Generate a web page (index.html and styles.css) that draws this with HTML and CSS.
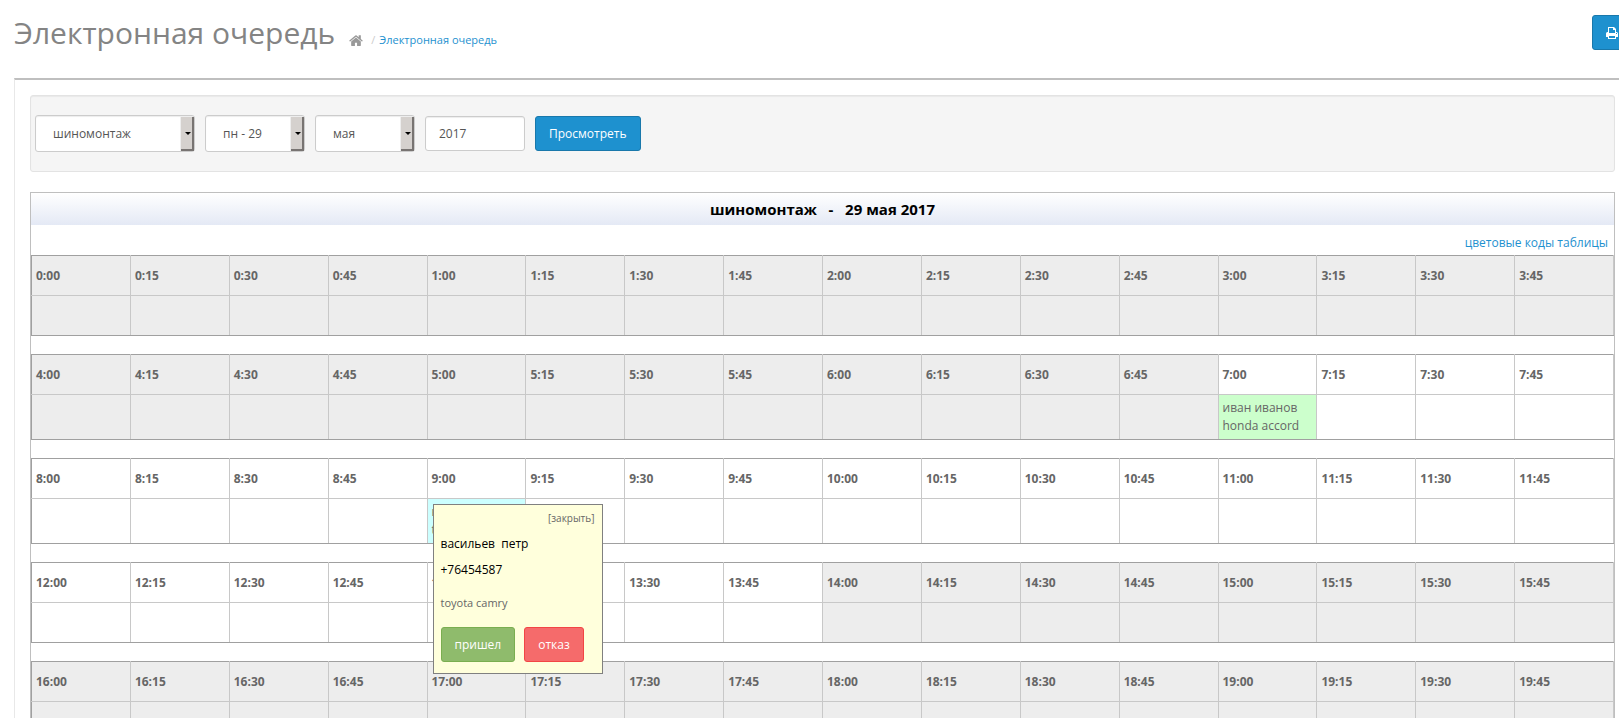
FILE: index.html
```html
<!DOCTYPE html>
<html lang="ru">
<head>
<meta charset="utf-8">
<title>Электронная очередь</title>
<link rel="stylesheet" href="styles.css">
</head>
<body>
<div class="page">
<header class="page-header">
  <h1>Электронная очередь</h1>
  <nav class="breadcrumb" aria-label="Навигация">
    <a class="home" href="#" aria-label="Главная"><svg viewBox="0 0 1664 1312" width="14" height="11" aria-hidden="true"><path fill="currentColor" d="M1408 768v480q0 26-19 45t-45 19H960V928H704v384H320q-26 0-45-19t-19-45V768l575-474 577 474zm223-69l-62 74q-8 9-21 11h-3q-13 0-21-7L832 200 140 777q-12 8-24 7-13-2-21-11l-62-74q-8-10-7-23t11-21L756 56q32-26 76-26t76 26l244 204V65q0-14 9-23t23-9h192q14 0 23 9t9 23v408l219 182q10 8 11 21t-7 23z"/></svg></a>
    <span class="slash">/</span>
    <a href="#">Электронная очередь</a>
  </nav>
  <button class="btn print" type="button" aria-label="Печать"><svg viewBox="0 0 12 12" width="12" height="12" aria-hidden="true"><path fill="currentColor" fill-rule="evenodd" d="M2 0h6l2 2v3h.5Q12 5 12 6.500V10h-2v2H2v-2H0V6.500Q0 5 1.500 5H2zM3 1v5h6V3H7V1zM3 9v2h6V9zM10 6v1h1V6z"/></svg></button>
</header>
<main class="panel">
  <form class="filter">
    <span class="picker wide"><select aria-label="Услуга"><option>шиномонтаж</option></select></span>
    <span class="picker"><select aria-label="День"><option>пн - 29</option></select></span>
    <span class="picker"><select aria-label="Месяц"><option>мая</option></select></span>
    <input class="year" type="text" value="2017" aria-label="Год">
    <button class="btn" type="button">Просмотреть</button>
  </form>
  <section class="schedule">
    <h2>шиномонтаж &nbsp; - &nbsp; 29 мая 2017</h2>
    <div class="legend"><a href="#">цветовые коды таблицы</a></div>
    <table class="slots">
      <tr class="off"><th>0:00</th><th>0:15</th><th>0:30</th><th>0:45</th><th>1:00</th><th>1:15</th><th>1:30</th><th>1:45</th><th>2:00</th><th>2:15</th><th>2:30</th><th>2:45</th><th>3:00</th><th>3:15</th><th>3:30</th><th>3:45</th></tr>
      <tr class="off"><td></td><td></td><td></td><td></td><td></td><td></td><td></td><td></td><td></td><td></td><td></td><td></td><td></td><td></td><td></td><td></td></tr>
    </table>
    <table class="slots">
      <tr><th class="off">4:00</th><th class="off">4:15</th><th class="off">4:30</th><th class="off">4:45</th><th class="off">5:00</th><th class="off">5:15</th><th class="off">5:30</th><th class="off">5:45</th><th class="off">6:00</th><th class="off">6:15</th><th class="off">6:30</th><th class="off">6:45</th><th>7:00</th><th>7:15</th><th>7:30</th><th>7:45</th></tr>
      <tr><td class="off"></td><td class="off"></td><td class="off"></td><td class="off"></td><td class="off"></td><td class="off"></td><td class="off"></td><td class="off"></td><td class="off"></td><td class="off"></td><td class="off"></td><td class="off"></td><td class="done">иван иванов<br>honda accord</td><td></td><td></td><td></td></tr>
    </table>
    <table class="slots">
      <tr><th>8:00</th><th>8:15</th><th>8:30</th><th>8:45</th><th>9:00</th><th>9:15</th><th>9:30</th><th>9:45</th><th>10:00</th><th>10:15</th><th>10:30</th><th>10:45</th><th>11:00</th><th>11:15</th><th>11:30</th><th>11:45</th></tr>
      <tr><td></td><td></td><td></td><td></td><td class="booked">васильев петр<br>toyota camry
        <div class="popup">
          <button class="close" type="button">[закрыть]</button>
          <p class="client">васильев &nbsp;петр</p>
          <p class="client">+76454587</p>
          <p class="car">toyota camry</p>
          <div class="actions">
            <button class="btn success" type="button">пришел</button>
            <button class="btn danger" type="button">отказ</button>
          </div>
        </div>
      </td><td></td><td></td><td></td><td></td><td></td><td></td><td></td><td></td><td></td><td></td><td></td></tr>
    </table>
    <table class="slots">
      <tr><th>12:00</th><th>12:15</th><th>12:30</th><th>12:45</th><th>13:00</th><th>13:15</th><th>13:30</th><th>13:45</th><th class="off">14:00</th><th class="off">14:15</th><th class="off">14:30</th><th class="off">14:45</th><th class="off">15:00</th><th class="off">15:15</th><th class="off">15:30</th><th class="off">15:45</th></tr>
      <tr><td></td><td></td><td></td><td></td><td></td><td></td><td></td><td></td><td class="off"></td><td class="off"></td><td class="off"></td><td class="off"></td><td class="off"></td><td class="off"></td><td class="off"></td><td class="off"></td></tr>
    </table>
    <table class="slots">
      <tr class="off"><th>16:00</th><th>16:15</th><th>16:30</th><th>16:45</th><th>17:00</th><th>17:15</th><th>17:30</th><th>17:45</th><th>18:00</th><th>18:15</th><th>18:30</th><th>18:45</th><th>19:00</th><th>19:15</th><th>19:30</th><th>19:45</th></tr>
      <tr class="off"><td></td><td></td><td></td><td></td><td></td><td></td><td></td><td></td><td></td><td></td><td></td><td></td><td></td><td></td><td></td><td></td></tr>
    </table>
  </section>
</main>
</div>
</body>
</html>
```
FILE: styles.css
```css
* { box-sizing: border-box; }
html { overflow: hidden; }
body {
  margin: 0;
  height: 100vh;
  overflow: hidden;
  background: #fff;
  color: #666;
  font: 12px/18px "Open Sans", "Noto Sans", sans-serif;
}
a { color: #1e91cf; text-decoration: none; }
button, input, select { font: inherit; }
p { margin: 0; }

/* The content column runs past the right edge of the window */
.page { margin-left: 14px; margin-right: -12px; }

.page-header { display: flex; align-items: flex-start; padding-top: 15px; height: 78px; }
h1 { margin: 0; font-size: 30px; font-weight: 400; line-height: 36px; color: #848484; }
.breadcrumb { display: flex; align-items: center; margin: 16px 0 0 14px; font-size: 11px; }
.home { display: flex; color: #999; }
.slash { color: #ccc; margin: 0 4px 0 8px; }

.btn {
  height: 35px;
  padding: 0 13px;
  border: 1px solid #1978ab;
  border-radius: 3px;
  background: #1e91cf;
  color: #fff;
}
.print { margin-left: auto; width: 39px; display: flex; align-items: center; }
.print svg { flex: none; }
.success { background: #8fbb6c; border-color: #7aae50; }
.danger { background: #f56b6b; border-color: #f24545; }

.panel { border: 1px solid #e8e8e8; border-top: 2px solid #bfbfbf; padding: 15px; }

.filter {
  display: flex;
  align-items: center;
  gap: 10px;
  height: 77px;
  padding: 0 4px;
  border: 1px solid #e3e3e3;
  border-radius: 3px;
  background: #f5f5f5;
  box-shadow: inset 0 1px 1px rgba(0, 0, 0, .05);
}
.picker { position: relative; width: 100px; height: 37px; }
.wide { width: 160px; }
.picker select {
  appearance: none;
  width: 100%;
  height: 100%;
  padding: 0 17px;
}
.picker::before {
  content: "";
  position: absolute;
  inset: 2px 1px 1px auto;
  width: 11px;
  border: solid #787472;
  border-width: 0 2px 2px 0;
  background: #d5d1ce;
  box-shadow: -1px 0 #eee;
  pointer-events: none;
}
.picker::after {
  content: "";
  position: absolute;
  right: 4px;
  top: 17px;
  border: 3px solid transparent;
  border-top-color: #000;
  border-bottom: 0;
  pointer-events: none;
}
.picker select, .year {
  border: 1px solid #ccc;
  border-radius: 3px;
  background: #fff;
  color: #555;
  box-shadow: inset 0 1px 1px rgba(0, 0, 0, .075);
}
.year { width: 100px; height: 35px; padding: 0 13px; }

.schedule { margin-top: 20px; border: 1px solid #bfbfbf; }
h2 {
  margin: 0;
  background: linear-gradient(#fff, #e4e9f5);
  color: #000;
  font-size: 15px;
  line-height: 32px;
  text-align: center;
}
.legend { height: 30px; padding: 9px 6px 0; text-align: right; }

.slots {
  width: 100%;
  margin-bottom: 18px;
  table-layout: fixed;
  border-collapse: collapse;
}
.slots th, .slots td {
  height: 40px;
  padding: 4px;
  border: 1px solid #c8c8c8;
  text-align: left;
  white-space: nowrap;
}
.slots th { border-top-color: #a0a0a0; }
.slots td { border-bottom-color: #a0a0a0; }
.slots th:first-child, .slots td:first-child { border-left-color: #a0a0a0; }
.off { background: #ededed; }
.slots .done { background: #cfc; }
.slots .booked { position: relative; background: #cff; }

.popup {
  position: absolute;
  z-index: 1;
  left: 5px;
  top: 5px;
  width: 170px;
  padding: 4px 7px 11px;
  border: 1px solid #808080;
  background: #ffffdc;
}
.close {
  display: block;
  margin: 0 0 4px auto;
  padding: 0;
  border: 0;
  background: none;
  color: #666;
  font-size: 10px;
  line-height: 18px;
}
.client { color: #000; line-height: 26px; }
.car { margin: 11px 0 15px; font-size: 11px; line-height: 18px; }
.actions { display: flex; gap: 9px; }
```
